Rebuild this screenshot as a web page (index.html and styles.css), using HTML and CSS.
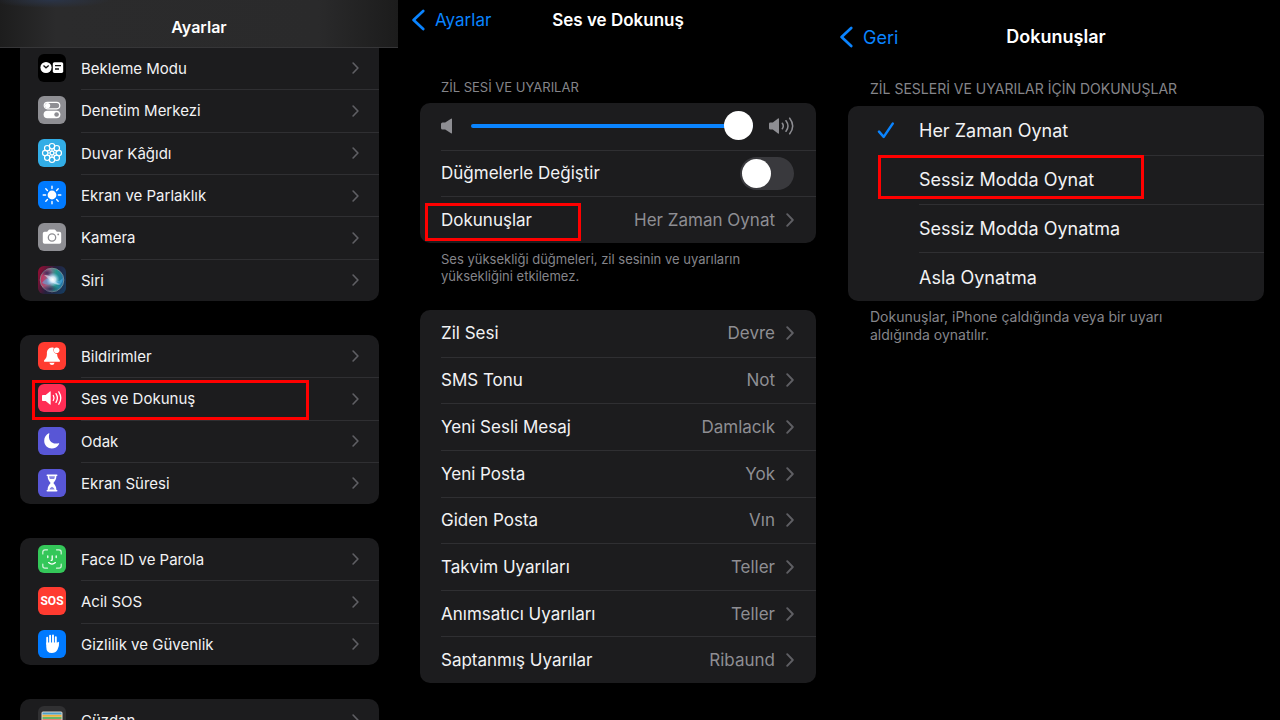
FILE: index.html
```html
<!DOCTYPE html>
<html lang="tr">
<head>
<meta charset="utf-8">
<meta name="viewport" content="width=device-width, initial-scale=1">
<title>Ayarlar</title>
<link rel="stylesheet" href="styles.css">
</head>
<body>
<svg class="defs" aria-hidden="true">
  <symbol id="chevron" viewBox="0 0 8 14"><path d="M1.2 1.2 6.8 7l-5.6 5.8" fill="none" stroke="currentColor" stroke-width="1.9" stroke-linecap="round" stroke-linejoin="round"/></symbol>
  <symbol id="back" viewBox="0 0 14 22"><path d="M12.2 2 2.6 11l9.6 9" fill="none" stroke="currentColor" stroke-width="2.7" stroke-linecap="round" stroke-linejoin="round"/></symbol>
</svg>
<main class="screens">

  <section class="screen screen-settings">
    <header class="bar"><h1 class="title">Ayarlar</h1></header>
    <nav class="groups">
      <div class="card six">
        <a class="row" href="#"><svg class="icon" viewBox="0 0 28 28"><rect width="28" height="28" rx="6" fill="#000"/><circle cx="8" cy="13.5" r="5.6" fill="#fff"/><path d="M5.5 11.5 8 13.8l2.7-2.3" fill="none" stroke="#111" stroke-width="1.3"/><rect x="14.8" y="8.2" width="10.4" height="10.7" rx="1.6" fill="#fff"/><path d="M17 11.7h6M17 15h4" stroke="#111" stroke-width="1.3"/></svg><span class="body">Bekleme Modu<svg class="chev"><use href="#chevron"/></svg></span></a>
        <a class="row" href="#"><svg class="icon" viewBox="0 0 28 28"><rect width="28" height="28" rx="6" fill="#8e8e93"/><rect x="6.2" y="6.4" width="15.6" height="6.4" rx="3.2" fill="none" stroke="#fff" stroke-width="1.2"/><circle cx="9.6" cy="9.6" r="2.6" fill="#fff"/><rect x="5.6" y="14.7" width="16.8" height="7.6" rx="3.8" fill="#fff"/><circle cx="18.6" cy="18.5" r="2.3" fill="#8e8e93"/></svg><span class="body">Denetim Merkezi<svg class="chev"><use href="#chevron"/></svg></span></a>
        <a class="row" href="#"><svg class="icon" viewBox="0 0 28 28"><rect width="28" height="28" rx="6" fill="#32ade6"/><g fill="none" stroke="#fff" stroke-width="1.15"><circle cx="14" cy="7.2" r="2.7"/><circle cx="18.8" cy="9.2" r="2.7"/><circle cx="20.8" cy="14" r="2.7"/><circle cx="18.8" cy="18.8" r="2.7"/><circle cx="14" cy="20.8" r="2.7"/><circle cx="9.2" cy="18.8" r="2.7"/><circle cx="7.2" cy="14" r="2.7"/><circle cx="9.2" cy="9.2" r="2.7"/><circle cx="14" cy="14" r="1.9"/><path d="M14 10v2.2M14 15.8V18M10 14h2.2M15.8 14H18M11.2 11.2l1.5 1.5M15.3 15.3l1.5 1.5M16.8 11.2l-1.5 1.5M12.7 15.3l-1.5 1.5"/></g></svg><span class="body">Duvar Kâğıdı<svg class="chev"><use href="#chevron"/></svg></span></a>
        <a class="row" href="#"><svg class="icon" viewBox="0 0 28 28"><rect width="28" height="28" rx="6" fill="#007aff"/><circle cx="14" cy="14" r="4.4" fill="#fff"/><path d="M14 5.2v2.4M14 20.4v2.4M5.2 14h2.4M20.4 14h2.4M7.8 7.8l1.6 1.6M18.6 18.6l1.6 1.6M20.2 7.8l-1.6 1.6M9.4 18.6l-1.6 1.6" stroke="#fff" stroke-width="1.4" stroke-linecap="round"/></svg><span class="body">Ekran ve Parlaklık<svg class="chev"><use href="#chevron"/></svg></span></a>
        <a class="row" href="#"><svg class="icon" viewBox="0 0 28 28"><rect width="28" height="28" rx="6" fill="#8e8e93"/><path d="M6.6 8.7h2.6l1.2-1.5q.5-.6 1.2-.6h4.8q.7 0 1.2.6l1.2 1.5h2.6q1.8 0 1.8 1.8v8.4q0 1.8-1.8 1.8H6.6q-1.8 0-1.8-1.8v-8.4q0-1.8 1.8-1.8z" fill="#fff"/><circle cx="14" cy="14.5" r="3.7" fill="none" stroke="#8e8e93" stroke-width="1.3"/><circle cx="20.2" cy="11.4" r=".9" fill="#8e8e93"/></svg><span class="body">Kamera<svg class="chev"><use href="#chevron"/></svg></span></a>
        <a class="row" href="#"><svg class="icon" viewBox="0 0 28 28"><defs>
          <linearGradient id="siri-back" x1="0" y1=".3" x2="1" y2=".7"><stop offset="0" stop-color="#8a0f34"/><stop offset=".45" stop-color="#26203c"/><stop offset="1" stop-color="#173a5e"/></linearGradient>
          <linearGradient id="siri-orb" x1="0" y1=".4" x2="1" y2=".5"><stop offset="0" stop-color="#d02a5c"/><stop offset=".4" stop-color="#85708c"/><stop offset=".65" stop-color="#22978a"/><stop offset="1" stop-color="#2470b0"/></linearGradient>
          <radialGradient id="siri-glow"><stop offset="0" stop-color="#fff"/><stop offset=".4" stop-color="#e4f4ff" stop-opacity=".85"/><stop offset="1" stop-color="#7fc5ff" stop-opacity="0"/></radialGradient>
          <radialGradient id="siri-dark"><stop offset="0" stop-color="#2a2150" stop-opacity=".8"/><stop offset="1" stop-color="#2a2150" stop-opacity="0"/></radialGradient></defs>
          <rect width="28" height="28" rx="6" fill="url(#siri-back)"/><circle cx="14" cy="14" r="11.8" fill="url(#siri-orb)" stroke="#7f9a9c" stroke-width=".8"/><ellipse cx="9" cy="7" rx="6" ry="4" fill="url(#siri-dark)"/><ellipse cx="12" cy="23" rx="9" ry="4" fill="url(#siri-dark)"/><path d="M4 17q5-7 10-3t11-2q-1 8-6 6t-7 0-8-1z" fill="#5ab8ef" opacity=".5"/><path d="M6 9q7 0 10 5 3 4 7 4-5 2-9-2T6 9z" fill="#fff" opacity=".5"/><circle cx="14.8" cy="13.5" r="7" fill="url(#siri-glow)"/></svg><span class="body">Siri<svg class="chev"><use href="#chevron"/></svg></span></a>
      </div>

      <div class="card four">
        <a class="row" href="#"><svg class="icon" viewBox="0 0 28 28"><rect width="28" height="28" rx="6" fill="#ff3b30"/><path d="M14 5.4c-3.6.2-5.1 2.8-5.1 6 0 4-1.1 5-2.500 6.500-.8.9-.5 1.800.7 1.800h13.800c1.200 0 1.500-.9.7-1.800-1.400-1.500-2.400-2.500-2.500-6.100-2.900-.2-4.600-3.400-3.200-5.900-.6-.4-1.200-.5-1.900-.5z" fill="#fff"/><path d="M11.4 20.800h5.200q-.5 2.200-2.600 2.200t-2.600-2.200z" fill="#fff"/><circle cx="18.600" cy="8.200" r="2.800" fill="#fff"/></svg><span class="body">Bildirimler<svg class="chev"><use href="#chevron"/></svg></span></a>
        <a class="row marked" href="#"><svg class="icon" viewBox="0 0 28 28"><rect width="28" height="28" rx="6" fill="#ff2d55"/><path d="M4.8 11h2.9l4.2-3.500q.8-.6.8.4v12.200q0 1-.8.4L7.7 17H4.8q-.8 0-.8-.8v-4.400q0-.8.8-.8z" fill="#fff"/><path d="M15.300 11.500q1.500 2.500 0 5M18 9.600q2.800 4.400 0 8.800M20.800 7.800q4 6.200 0 12.400" fill="none" stroke="#fff" stroke-width="1.300" stroke-linecap="round"/></svg><span class="body">Ses ve Dokunuş<svg class="chev"><use href="#chevron"/></svg></span><span class="mark mark-sound"></span></a>
        <a class="row" href="#"><svg class="icon" viewBox="0 0 28 28"><rect width="28" height="28" rx="6" fill="#5856d6"/><path d="M10.800 6.300q.8-.3.5.6c-1.700 5.700 2.300 11 9.300 9.300q.9-.2.5.7C17.600 24 6.200 22.600 6.200 13.800c0-3.500 1.900-6.300 4.600-7.500z" fill="#fff"/></svg><span class="body">Odak<svg class="chev"><use href="#chevron"/></svg></span></a>
        <a class="row" href="#"><svg class="icon" viewBox="0 0 28 28"><rect width="28" height="28" rx="6" fill="#5856d6"/><path d="M9.300 5.400h9.400q.8 0 .8.800t-.8.800h-.3c0 3.500-1.400 5-3 7 1.600 2 3 3.500 3 7h.3q.8 0 .8.800t-.8.800H9.300q-.8 0-.8-.8t.8-.8h.3c0-3.500 1.400-5 3-7-1.600-2-3-3.500-3-7h-.3q-.8 0-.8-.8t.8-.8z" fill="#fff"/><path d="M11.100 7.200h5.800q-.1 1.500-.8 2.700h-4.200q-.7-1.200-.8-2.700zM11.300 20.400q.4-1.500 2.700-2.700 2.300 1.200 2.700 2.700z" fill="#8987e2"/></svg><span class="body">Ekran Süresi<svg class="chev"><use href="#chevron"/></svg></span></a>
      </div>

      <div class="card three">
        <a class="row" href="#"><svg class="icon" viewBox="0 0 28 28"><rect width="28" height="28" rx="6" fill="#34c759"/><g fill="none" stroke="#fff" stroke-linecap="round"><path d="M4.800 9V7q0-2.200 2.200-2.200h2.500M18.500 4.800H21q2.200 0 2.200 2.200v2M23.200 19v2q0 2.200-2.200 2.200h-2.500M9.500 23.200H7q-2.200 0-2.200-2.200v-2" stroke-width="1.200" opacity=".8"/><path d="M9.800 11v1.600M18.200 11v1.600M14.200 10.800v3.700q0 .9-1 .9M10.600 17.600q3.400 2.900 6.800 0" stroke-width="1.300"/></g></svg><span class="body">Face ID ve Parola<svg class="chev"><use href="#chevron"/></svg></span></a>
        <a class="row" href="#"><svg class="icon" viewBox="0 0 28 28"><rect width="28" height="28" rx="6" fill="#ff3b30"/><text class="sos" x="14" y="18" text-anchor="middle">SOS</text></svg><span class="body">Acil SOS<svg class="chev"><use href="#chevron"/></svg></span></a>
        <a class="row" href="#"><svg class="icon" viewBox="0 0 28 28"><rect width="28" height="28" rx="6" fill="#007aff"/><g fill="none" stroke="#fff" stroke-linecap="round" stroke-width="1.900"><path d="M9.200 14V7.700M12.100 13V5.700M15 13V5.500M17.800 14V7.200M18.500 17.500l1.700-4.700"/></g><path d="M8.250 12.500h10.500l.5 2 1.700-2q.5 4-1.500 7.200-1.900 3.300-5.600 3.300-5.600 0-5.600-6.300z" fill="#fff"/></svg><span class="body">Gizlilik ve Güvenlik<svg class="chev"><use href="#chevron"/></svg></span></a>
      </div>

      <div class="card one">
        <a class="row" href="#"><svg class="icon" viewBox="0 0 28 28"><rect width="28" height="28" rx="6" fill="#303032"/><rect x="3.500" y="5.500" width="21" height="17" rx="1.500" fill="#d8d5cb"/><path d="M4.500 7.500h19" stroke="#4b9fc8" stroke-width="2"/><path d="M4.500 9.800h19" stroke="#efb236" stroke-width="1.800"/><path d="M4.500 12h19" stroke="#58b35c" stroke-width="1.800"/><path d="M4.500 14.500h19" stroke="#e46b5f" stroke-width="2.600"/></svg><span class="body">Cüzdan<svg class="chev"><use href="#chevron"/></svg></span></a>
      </div>
    </nav>
  </section>

  <section class="screen screen-sound">
    <header class="navbar">
      <a class="back" href="#"><svg class="back-icon"><use href="#back"/></svg>Ayarlar</a>
      <h2 class="title">Ses ve Dokunuş</h2>
    </header>
    <h3 class="caption">ZİL SESİ VE UYARILAR</h3>
    <div class="card controls">
      <div class="row"><div class="body volume">
        <svg class="quiet" viewBox="0 0 12 16"><path d="M1.500 4.600h2.700L10 .7q1-.6 1 .5v13.600q0 1.100-1 .5l-5.800-3.900H1.500q-1.500 0-1.500-1.500V6.100q0-1.500 1.500-1.500z" fill="#8e8e93"/></svg>
        <input class="slider" type="range" min="0" max="100" value="100" aria-label="Ses yüksekliği">
        <svg class="loud" viewBox="0 0 25 18"><path d="M1.300 5.400h2.500L9 1.500q1-.6 1 .5v14q0 1.100-1 .5l-5.200-3.900H1.300Q0 12.600 0 11.300V6.700q0-1.300 1.300-1.300z" fill="#8e8e93"/><path d="M13.300 6.300q2 2.700 0 5.400M17 3.700q4 5.300 0 10.600M20.700 1.200q6 7.800 0 15.600" fill="none" stroke="#8e8e93" stroke-width="1.500" stroke-linecap="round"/></svg>
      </div></div>
      <label class="row"><span class="body">Düğmelerle Değiştir<input class="switch" type="checkbox" role="switch"></span></label>
      <a class="row marked" href="#"><span class="body">Dokunuşlar<span class="value">Her Zaman Oynat</span><svg class="chev"><use href="#chevron"/></svg></span><span class="mark mark-haptics"></span></a>
    </div>
    <p class="note">Ses yüksekliği düğmeleri, zil sesinin ve uyarıların yüksekliğini etkilemez.</p>
    <nav class="card tones">
      <a class="row" href="#"><span class="body">Zil Sesi<span class="value">Devre</span><svg class="chev"><use href="#chevron"/></svg></span></a>
      <a class="row" href="#"><span class="body">SMS Tonu<span class="value">Not</span><svg class="chev"><use href="#chevron"/></svg></span></a>
      <a class="row" href="#"><span class="body">Yeni Sesli Mesaj<span class="value">Damlacık</span><svg class="chev"><use href="#chevron"/></svg></span></a>
      <a class="row" href="#"><span class="body">Yeni Posta<span class="value">Yok</span><svg class="chev"><use href="#chevron"/></svg></span></a>
      <a class="row" href="#"><span class="body">Giden Posta<span class="value">Vın</span><svg class="chev"><use href="#chevron"/></svg></span></a>
      <a class="row" href="#"><span class="body">Takvim Uyarıları<span class="value">Teller</span><svg class="chev"><use href="#chevron"/></svg></span></a>
      <a class="row" href="#"><span class="body">Anımsatıcı Uyarıları<span class="value">Teller</span><svg class="chev"><use href="#chevron"/></svg></span></a>
      <a class="row" href="#"><span class="body">Saptanmış Uyarılar<span class="value">Ribaund</span><svg class="chev"><use href="#chevron"/></svg></span></a>
    </nav>
  </section>

  <section class="screen screen-haptics">
    <header class="navbar">
      <a class="back" href="#"><svg class="back-icon"><use href="#back"/></svg>Geri</a>
      <h2 class="title">Dokunuşlar</h2>
    </header>
    <h3 class="caption">ZİL SESLERİ VE UYARILAR İÇİN DOKUNUŞLAR</h3>
    <div class="card options">
      <label class="row"><input class="choice" type="radio" name="haptics" checked><svg class="tick" viewBox="0 0 17 17"><path d="m1.500 9.600 4.700 5.300L15.200 1.600" fill="none" stroke="currentColor" stroke-width="2.500" stroke-linecap="round" stroke-linejoin="round"/></svg><span class="body">Her Zaman Oynat</span></label>
      <label class="row marked"><input class="choice" type="radio" name="haptics"><svg class="tick"></svg><span class="body">Sessiz Modda Oynat</span><span class="mark mark-silent"></span></label>
      <label class="row"><input class="choice" type="radio" name="haptics"><svg class="tick"></svg><span class="body">Sessiz Modda Oynatma</span></label>
      <label class="row"><input class="choice" type="radio" name="haptics"><svg class="tick"></svg><span class="body">Asla Oynatma</span></label>
    </div>
    <p class="note">Dokunuşlar, iPhone çaldığında veya bir uyarı aldığında oynatılır.</p>
  </section>

</main>
</body>
</html>
```

FILE: styles.css
```css
* { box-sizing: border-box; }

body {
  margin: 0;
  background: #000;
  color: #f2f2f4;
  font-family: Inter, "Noto Sans", sans-serif;
  font-size: 17px;
  overflow: hidden;
}

h1, h2, h3, p { margin: 0; }
a { color: inherit; text-decoration: none; }
.defs { display: none; }

.screens {
  display: grid;
  grid-template-columns: 398fr 428fr 454fr;
  height: 100vh;
  overflow: hidden;
}

.screen { min-width: 0; }

.title {
  color: #fff;
  font-size: 17px;
  font-weight: 600;
  line-height: 24px;
  text-align: center;
}

/* Grouped lists */
.card {
  display: grid;
  grid-auto-rows: 1fr;
  border-radius: 10px;
  background: #1c1c1e;
}

.row {
  position: relative;
  display: flex;
  align-items: center;
}

.body {
  display: flex;
  flex: 1;
  align-items: center;
  align-self: stretch;
}

.row + .row .body { border-top: 1px solid #2f2f32; }

.chev {
  flex: none;
  width: 8px;
  height: 14px;
  margin-left: auto;
  color: #5f5f64;
}

.value { margin-left: auto; color: #8e8e93; }
.value + .chev { margin-left: 11px; }

.mark {
  position: absolute;
  border: 3px solid #f00;
  pointer-events: none;
}

/* Settings */
.screen-settings { font-size: 15px; }
.screen-settings .title { font-size: 16px; }

.bar {
  position: relative;
  z-index: 1;
  padding: 15px 0 8px;
  border-bottom: 1px solid #363638;
  background:
    radial-gradient(ellipse at 13% 0, #2a3448 0, transparent 12%),
    linear-gradient(90deg, #1d1d1d, #2b2b2c 14%, #2a2a2b 80%, #1c1c1c);
}

.groups {
  display: flex;
  flex-direction: column;
  gap: 34px;
  margin-top: -1px;
  padding: 0 19px 0 20px;
}

.six { min-height: 254px; border-radius: 0 0 10px 10px; }
.four { min-height: 169px; }
.three { min-height: 127px; }
.one { min-height: 42px; }

.screen-settings .row { gap: 15px; padding-left: 18px; }
.screen-settings .body { padding-right: 20px; }
.screen-settings .chev { width: 7px; height: 12px; }
.icon { flex: none; width: 28px; height: 28px; }
.sos { fill: #fff; font-family: Roboto, sans-serif; font-size: 12px; font-weight: 700; }
.mark-sound { top: 3px; left: 12px; width: 277px; height: 40px; }

/* Navigation bars */
.navbar {
  display: grid;
  grid-template-columns: 1fr auto 1fr;
  align-items: center;
}

.back {
  display: flex;
  align-items: center;
  gap: 10px;
  color: #0a84ff;
}

.back-icon { width: 14px; height: 22px; }

.caption, .note {
  color: #85858a;
  font-weight: 400;
}

.caption { font-size: 13px; line-height: 16px; }
.note { font-size: 13px; line-height: 17px; }

/* Sounds */
.screen-sound { padding: 0 10px 0 22px; }
.screen-sound .navbar { margin: 8px -9px 0 -9px; }
.screen-sound .caption { margin: 47px 0 8px 21px; }
.screen-sound .row { padding-left: 21px; }
.screen-sound .body { padding-right: 22px; }
.screen-sound .note { max-width: 350px; margin: 8px 0 25px 21px; }
.controls { min-height: 140px; }
.tones { min-height: 373px; }

.quiet { flex: none; width: 12px; height: 16px; margin-right: 18px; }
.loud { flex: none; width: 25px; height: 18px; margin-left: 16px; }

.slider {
  flex: 1;
  min-width: 0;
  height: 28px;
  margin: 0;
  appearance: none;
  background: transparent;
}

.slider::-webkit-slider-runnable-track {
  height: 4px;
  border-radius: 2px;
  background: #0a84ff;
}

.slider::-webkit-slider-thumb {
  width: 29px;
  height: 29px;
  margin-top: -13px;
  border-radius: 50%;
  appearance: none;
  background: #fff;
}

.switch {
  width: 54px;
  height: 33px;
  margin: 0 0 0 auto;
  padding: 2px;
  border-radius: 17px;
  appearance: none;
  background: #39393d;
}

.switch::before {
  display: block;
  width: 29px;
  height: 29px;
  border-radius: 50%;
  background: #fff;
  content: "";
}

.switch:checked { background: #30d158; }
.switch:checked::before { margin-left: auto; }

.mark-haptics { top: 7px; left: 5px; width: 156px; height: 38px; }

/* Haptics */
.screen-haptics { padding: 0 16px 0 22px; font-size: 18px; }
.screen-haptics .title { font-size: 18px; }
.screen-haptics .navbar { margin: 25px -9px 0 -9px; }
.screen-haptics .caption { margin: 32px 0 9px 22px; font-size: 14px; }
.screen-haptics .row { gap: 24px; padding-left: 29px; }
.screen-haptics .note { max-width: 320px; margin: 7px 0 0 22px; font-size: 14px; line-height: 18px; }
.options { min-height: 195px; }
.choice { position: absolute; opacity: 0; }
.tick { flex: none; width: 18px; height: 17px; color: #0a84ff; }
.mark-silent { top: 0; left: 30px; width: 266px; height: 44px; }
```
